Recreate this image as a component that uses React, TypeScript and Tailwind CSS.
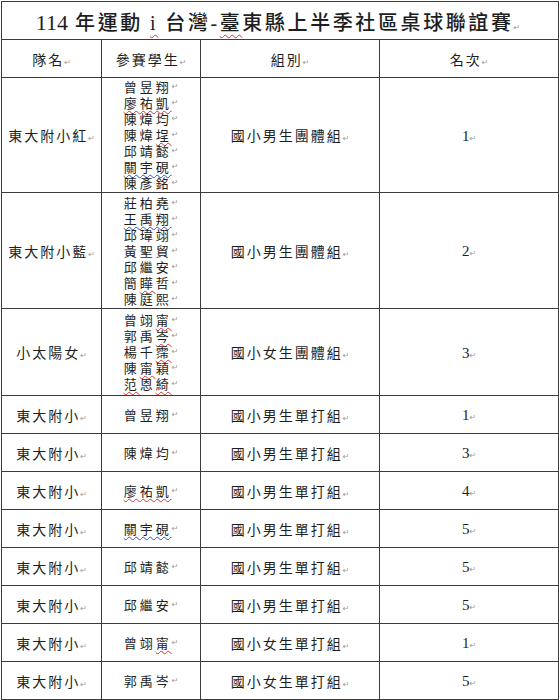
import React from "react";

const cjk = { fontFamily: '"Noto Sans CJK TC", "Noto Sans", sans-serif' };
const serif = { fontFamily: '"Liberation Serif", "Noto Sans CJK TC", serif' };

const Mark = () => (
  <span
    className="text-[8px] leading-none text-[#9a9a9a] tracking-normal"
    style={{ fontFamily: '"DejaVu Sans", sans-serif' }}
  >
    ↵
  </span>
);

// spell-check squiggles: r = red, b = blue
type Seg = { t: string; u?: "r" | "b" };

const Squiggle = ({ seg }: { seg: Seg }) => {
  if (!seg.u) return <>{seg.t}</>;
  return (
    <span
      className={`underline decoration-wavy decoration-1 underline-offset-[2px] ${
        seg.u === "r" ? "decoration-[#e03030]" : "decoration-[#3050e0]"
      }`}
    >
      {seg.t}
    </span>
  );
};

const Line = ({ segs }: { segs: Seg[] }) => (
  <div className="h-[16px] leading-[16px] whitespace-nowrap flex items-center justify-center text-[13px] tracking-[3px]">
    <span className="leading-[16px]">
      {segs.map((s, i) => (
        <Squiggle key={i} seg={s} />
      ))}
    </span>
    <Mark />
  </div>
);

const p = (t: string): Seg[] => [{ t }];

type Row = {
  team: string;
  names: Seg[][];
  group: string;
  rank: string;
  h: string;
};

const rows: Row[] = [
  {
    team: "東大附小紅",
    names: [
      p("曾昱翔"),
      [{ t: "廖祐凱", u: "r" }],
      p("陳煒均"),
      [{ t: "陳煒" }, { t: "埕", u: "r" }],
      p("邱靖懿"),
      [{ t: "關宇硯", u: "b" }],
      p("陳彥銘"),
    ],
    group: "國小男生團體組",
    rank: "1",
    h: "h-[115px]",
  },
  {
    team: "東大附小藍",
    names: [
      p("莊柏堯"),
      [{ t: "王禹翔", u: "b" }],
      p("邱瑋翊"),
      p("黃聖貿"),
      p("邱繼安"),
      [{ t: "簡" }, { t: "瞱", u: "r" }, { t: "哲" }],
      p("陳庭熙"),
    ],
    group: "國小男生團體組",
    rank: "2",
    h: "h-[116px]",
  },
  {
    team: "小太陽女",
    names: [
      [{ t: "曾翊" }, { t: "甯", u: "r" }],
      [{ t: "郭禹" }, { t: "岑", u: "r" }],
      [{ t: "楊千" }, { t: "霈", u: "r" }],
      [{ t: "陳" }, { t: "甯", u: "r" }, { t: "穎" }],
      [{ t: "范", u: "r" }, { t: "恩" }, { t: "綺", u: "r" }],
    ],
    group: "國小女生團體組",
    rank: "3",
    h: "h-[87px]",
  },
  { team: "東大附小", names: [p("曾昱翔")], group: "國小男生單打組", rank: "1", h: "h-[38px]" },
  { team: "東大附小", names: [p("陳煒均")], group: "國小男生單打組", rank: "3", h: "h-[38px]" },
  { team: "東大附小", names: [[{ t: "廖祐凱", u: "r" }]], group: "國小男生單打組", rank: "4", h: "h-[38px]" },
  { team: "東大附小", names: [[{ t: "關宇硯", u: "b" }]], group: "國小男生單打組", rank: "5", h: "h-[38px]" },
  { team: "東大附小", names: [p("邱靖懿")], group: "國小男生單打組", rank: "5", h: "h-[38px]" },
  { team: "東大附小", names: [p("邱繼安")], group: "國小男生單打組", rank: "5", h: "h-[38px]" },
  { team: "東大附小", names: [[{ t: "曾翊" }, { t: "甯", u: "r" }]], group: "國小女生單打組", rank: "1", h: "h-[38px]" },
  { team: "東大附小", names: [p("郭禹岑")], group: "國小女生單打組", rank: "5", h: "h-[38px]" },
];

const cell = "border border-[#3c3c3c] text-center align-middle p-0 leading-[16px]";

export default function App() {
  return (
    <div className="bg-white min-h-[700px] pt-px pl-px text-[#1e1e1e]" style={cjk}>
      <table className="border-collapse table-fixed w-[557px]">
        <colgroup>
          <col className="w-[100px]" />
          <col className="w-[99px]" />
          <col className="w-[179px]" />
          <col className="w-[179px]" />
        </colgroup>
        <tbody>
          <tr>
            <td colSpan={4} className={`${cell} h-[38px]`}>
              <div className="text-[20px] leading-[24px] tracking-[2.6px] pt-[3px] pr-[4px] whitespace-nowrap font-medium">
                <span className="text-[22px] tracking-normal" style={serif}>
                  114
                </span>{" "}
                年運動{" "}
                <span
                  className="underline decoration-wavy decoration-1 decoration-[#e03030] underline-offset-[4px]"
                  style={serif}
                >
                  i
                </span>{" "}
                台灣
                <span style={serif}>-</span>
                <span className="underline decoration-wavy decoration-1 decoration-[#e03030] underline-offset-[4px]">
                  臺
                </span>
                東縣上半季社區桌球聯誼賽
                <Mark />
              </div>
            </td>
          </tr>
          <tr className="text-[14px] tracking-[2px]">
            <td className={`${cell} h-[38px]`}>
              隊名
              <Mark />
            </td>
            <td className={cell}>
              參賽學生
              <Mark />
            </td>
            <td className={cell}>
              組別
              <Mark />
            </td>
            <td className={cell}>
              名次
              <Mark />
            </td>
          </tr>
          {rows.map((r, i) => (
            <tr key={i} className="text-[14px] tracking-[2px]">
              <td className={`${cell} ${r.h}`}>
                {r.team}
                <Mark />
              </td>
              <td className={cell}>
                <div className="flex flex-col items-center">
                  {r.names.map((n, j) => (
                    <Line key={j} segs={n} />
                  ))}
                </div>
              </td>
              <td className={cell}>
                {r.group}
                <Mark />
              </td>
              <td className={cell}>
                <span className="text-[15px] tracking-normal" style={serif}>
                  {r.rank}
                </span>
                <Mark />
              </td>
            </tr>
          ))}
        </tbody>
      </table>
    </div>
  );
}
